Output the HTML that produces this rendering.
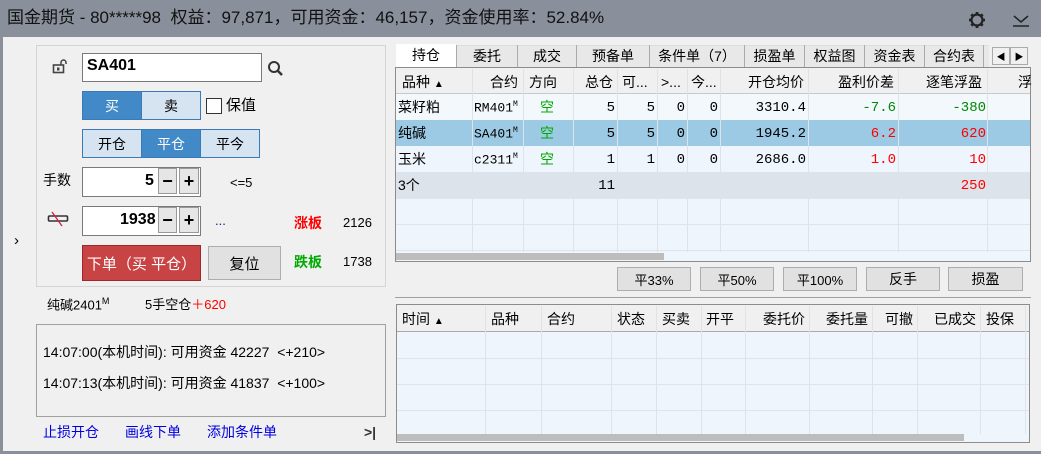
<!DOCTYPE html>
<html><head><meta charset="utf-8"><style>
*{margin:0;padding:0;box-sizing:border-box}
body{width:1041px;height:454px;overflow:hidden;background:#8a909b;font-family:"Liberation Sans","Noto Sans CJK SC",sans-serif;font-size:13px;color:#000;position:relative}
.a{position:absolute}
.main{left:3px;top:37px;width:1038px;height:414px;background:#f0f0f0}
.t{white-space:nowrap;line-height:1}
.btn{position:absolute;display:flex;align-items:center;justify-content:center;font-size:14px}
.grid{background:#eff5fc;border:1px solid #8c8c8c}
.cell{position:absolute;white-space:nowrap;font-size:14px;line-height:1}
.hdr{background:#f0f0f0;border-bottom:1px solid #c8c8c8}
.vl{position:absolute;width:1px;background:#dfe3e8}
.hl{position:absolute;height:1px;background:#e0e4ea}
.mono{font-family:"Liberation Mono","Noto Sans CJK SC",monospace}
.tab{position:absolute;top:45px;height:22px;line-height:22px;text-align:center;font-size:14px;border-left:1px solid #aaa;white-space:nowrap}
</style></head><body>
<div class="a t" style="left:7px;top:9px;font-size:17px;color:#111">国金期货 - 80*****98&nbsp; 权益：97,871，可用资金：46,157，资金使用率：52.84%</div>
<svg class="a" style="left:967px;top:10px" width="20" height="20" viewBox="0 0 20 20"><circle cx="10" cy="10" r="5.5" fill="none" stroke="#222" stroke-width="2.2"/><g stroke="#222" stroke-width="2.6"><line x1="10" y1="2" x2="10" y2="5"/><line x1="10" y1="15" x2="10" y2="18"/><line x1="2" y1="10" x2="5" y2="10"/><line x1="15" y1="10" x2="18" y2="10"/><line x1="4.3" y1="4.3" x2="6.4" y2="6.4"/><line x1="13.6" y1="13.6" x2="15.7" y2="15.7"/><line x1="4.3" y1="15.7" x2="6.4" y2="13.6"/><line x1="13.6" y1="6.4" x2="15.7" y2="4.3"/></g></svg>
<svg class="a" style="left:1012px;top:12px" width="18" height="16" viewBox="0 0 18 16"><polyline points="2,4 9,10 16,4" fill="none" stroke="#222" stroke-width="1.5"/><line x1="1" y1="14" x2="17" y2="14" stroke="#222" stroke-width="1.5"/></svg>

<div class="a main"></div>
<div class="a t" style="left:14px;top:233px;font-size:15px">›</div>
<div class="a" style="left:36px;top:45px;width:350px;height:242px;border:1px solid #d4d4d4"></div>
<svg class="a" style="left:52px;top:58px" width="16" height="16" viewBox="0 0 16 16"><rect x="1.5" y="7" width="10" height="7.5" fill="none" stroke="#444" stroke-width="1.6"/><rect x="5" y="9.5" width="2.5" height="3" fill="#444"/><path d="M9 7V4.5a2.5 2.5 0 0 1 5 0V6" fill="none" stroke="#444" stroke-width="1.5"/></svg>
<div class="a" style="left:82px;top:53px;width:180px;height:29px;background:#fff;border:1px solid #7a7a7a"></div>
<div class="a t" style="left:87px;top:58px;font-size:16px;font-weight:bold">SA401</div>
<svg class="a" style="left:267px;top:60px" width="18" height="18" viewBox="0 0 18 18"><circle cx="7" cy="7" r="5" fill="none" stroke="#333" stroke-width="2"/><line x1="10.5" y1="10.5" x2="15" y2="15" stroke="#333" stroke-width="2.5"/></svg>
<div class="btn" style="left:82px;top:91px;width:60px;height:29px;background:#4189c7;color:#fff;border:1px solid #3a7ab8">买</div>
<div class="btn" style="left:141px;top:91px;width:60px;height:29px;background:#d6e4f2;border:1px solid #3a7ab8">卖</div>
<div class="a" style="left:206px;top:98px;width:16px;height:16px;background:#fff;border:1px solid #333"></div>
<div class="a t" style="left:226px;top:98px;font-size:15px">保值</div>
<div class="btn" style="left:82px;top:129px;width:60px;height:29px;background:#d6e4f2;border:1px solid #3a7ab8">开仓</div>
<div class="btn" style="left:141px;top:129px;width:60px;height:29px;background:#4189c7;color:#fff;border:1px solid #3a7ab8">平仓</div>
<div class="btn" style="left:200px;top:129px;width:60px;height:29px;background:#d6e4f2;border:1px solid #3a7ab8">平今</div>
<div class="a t" style="left:43px;top:173px;font-size:14px">手数</div>
<div class="a" style="left:82px;top:167px;width:119px;height:30px;background:#fff;border:1px solid #7a7a7a"></div>
<div class="a t" style="left:145px;top:173px;font-size:16px;font-weight:bold">5</div>
<div class="btn" style="left:158px;top:168px;width:19px;height:26px;background:#e6e6e6;border:1px solid #999;font-weight:bold;font-size:18px">−</div>
<div class="btn" style="left:179px;top:168px;width:20px;height:26px;background:#e6e6e6;border:1px solid #999;font-weight:bold;font-size:18px">+</div>
<div class="a t" style="left:230px;top:176px;font-size:13px">&lt;=5</div>
<svg class="a" style="left:47px;top:211px" width="22" height="16" viewBox="0 0 22 16"><rect x="1.5" y="5" width="19" height="5" rx="1" fill="none" stroke="#333" stroke-width="1.6"/><line x1="5" y1="1" x2="15" y2="15" stroke="#d02040" stroke-width="1.3"/></svg>
<div class="a" style="left:82px;top:206px;width:119px;height:30px;background:#fff;border:1px solid #7a7a7a"></div>
<div class="a t" style="left:120px;top:212px;font-size:16px;font-weight:bold">1938</div>
<div class="btn" style="left:158px;top:207px;width:19px;height:26px;background:#e6e6e6;border:1px solid #999;font-weight:bold;font-size:18px">−</div>
<div class="btn" style="left:179px;top:207px;width:20px;height:26px;background:#e6e6e6;border:1px solid #999;font-weight:bold;font-size:18px">+</div>
<div class="a t" style="left:215px;top:214px;font-size:13px;color:#0a2a7a">...</div>
<div class="a t" style="left:294px;top:216px;font-size:14px;color:#f00;font-weight:bold">涨板</div>
<div class="a t" style="left:343px;top:216px;font-size:13px">2126</div>
<div class="btn" style="left:82px;top:245px;width:119px;height:36px;background:#c84444;color:#fff;border:1px solid #a02828;font-size:15px">下单（买 平仓）</div>
<div class="btn" style="left:208px;top:246px;width:73px;height:34px;background:#e1e1e1;border:1px solid #adadad;font-size:15px">复位</div>
<div class="a t" style="left:294px;top:255px;font-size:14px;color:#0a0;font-weight:bold">跌板</div>
<div class="a t" style="left:343px;top:255px;font-size:13px">1738</div>

<div class="a t" style="left:47px;top:297px;font-size:13px">纯碱2401<sup style="font-size:9px">M</sup></div>
<div class="a t" style="left:145px;top:298px;font-size:13px">5手空仓<span style="color:#f00">＋620</span></div>
<div class="a" style="left:36px;top:324px;width:350px;height:93px;border:1px solid #a0a0a0;background:#f0f0f0"></div>
<div class="a t" style="left:43px;top:345px;font-size:14px">14:07:00(本机时间): 可用资金 42227 &nbsp;&lt;+210&gt;</div>
<div class="a t" style="left:43px;top:376px;font-size:14px">14:07:13(本机时间): 可用资金 41837 &nbsp;&lt;+100&gt;</div>
<div class="a t" style="left:43px;top:425px;font-size:14px;color:#0000e0">止损开仓</div>
<div class="a t" style="left:125px;top:425px;font-size:14px;color:#0000e0">画线下单</div>
<div class="a t" style="left:207px;top:425px;font-size:14px;color:#0000e0">添加条件单</div>
<div class="a t" style="left:364px;top:425px;font-size:14px;color:#333;font-weight:bold">&gt;|</div>

<div class="a" style="left:396px;top:45px;width:593px;height:22px;background:#e8e8e8;border-top:1px solid #ddd"></div>
<div class="a" style="left:396px;top:44px;width:60px;height:24px;background:#fff"></div>
<div class="a t" style="left:396px;top:48px;width:60px;text-align:center;font-size:14px">持仓</div>
<div class="tab" style="left:456px;width:61px">委托</div>
<div class="tab" style="left:517px;width:59px">成交</div>
<div class="tab" style="left:576px;width:73px">预备单</div>
<div class="tab" style="left:649px;width:95px">条件单（7）</div>
<div class="tab" style="left:744px;width:60px">损盈单</div>
<div class="tab" style="left:804px;width:60px">权益图</div>
<div class="tab" style="left:864px;width:60px">资金表</div>
<div class="tab" style="left:924px;width:60px;border-right:1px solid #aaa">合约表</div>
<div class="btn" style="left:992px;top:47px;width:18px;height:18px;background:#f0f0f0;border:1px solid #aaa;font-size:9px">◀</div>
<div class="btn" style="left:1010px;top:47px;width:18px;height:18px;background:#f0f0f0;border:1px solid #aaa;font-size:9px">▶</div>

<div class="a grid" style="left:395px;top:67px;width:636px;height:195px"></div>
<div class="a hdr" style="left:396px;top:68px;width:634px;height:26px"></div>
<div class="a" style="left:396px;top:94px;width:634px;height:26px;background:#f3f8fd"></div>
<div class="a" style="left:396px;top:120px;width:634px;height:26px;background:#9ccae4"></div>
<div class="a" style="left:396px;top:172px;width:634px;height:26px;background:#dde3ea"></div>
<div class="hl" style="left:396px;top:198px;width:634px"></div>
<div class="hl" style="left:396px;top:224px;width:634px"></div>
<div class="hl" style="left:396px;top:250px;width:634px"></div>
<div class="vl" style="left:472px;top:69px;height:183px"></div>
<div class="vl" style="left:523px;top:69px;height:183px"></div>
<div class="vl" style="left:573px;top:69px;height:183px"></div>
<div class="vl" style="left:617px;top:69px;height:183px"></div>
<div class="vl" style="left:657px;top:69px;height:183px"></div>
<div class="vl" style="left:687px;top:69px;height:183px"></div>
<div class="vl" style="left:720px;top:69px;height:183px"></div>
<div class="vl" style="left:808px;top:69px;height:183px"></div>
<div class="vl" style="left:898px;top:69px;height:183px"></div>
<div class="vl" style="left:987px;top:69px;height:183px"></div>
<div class="a" style="left:396px;top:253px;width:268px;height:7px;background:#bdbdbd"></div>
<div class="cell" style="left:402px;top:75px">品种 <span style="font-size:10px">▲</span></div>
<div class="cell" style="left:472px;top:75px;width:46px;text-align:right">合约</div>
<div class="cell" style="left:529px;top:75px">方向</div>
<div class="cell" style="left:573px;top:75px;width:40px;text-align:right">总仓</div>
<div class="cell" style="left:622px;top:75px">可...</div>
<div class="cell" style="left:661px;top:75px">&gt;...</div>
<div class="cell" style="left:691px;top:75px">今...</div>
<div class="cell" style="left:720px;top:75px;width:84px;text-align:right">开仓均价</div>
<div class="cell" style="left:808px;top:75px;width:86px;text-align:right">盈利价差</div>
<div class="cell" style="left:898px;top:75px;width:84px;text-align:right">逐笔浮盈</div>
<div class="cell" style="left:1018px;top:75px">浮</div>

<div class="cell" style="left:398px;top:100px">菜籽粕</div>
<div class="cell mono" style="left:474px;top:101px;font-size:13px">RM401<sup style="font-size:8px">M</sup></div>
<div class="cell" style="left:540px;top:100px;color:#0a0">空</div>
<div class="cell mono" style="left:573px;top:101px;width:42px;text-align:right">5</div>
<div class="cell mono" style="left:617px;top:101px;width:38px;text-align:right">5</div>
<div class="cell mono" style="left:657px;top:101px;width:28px;text-align:right">0</div>
<div class="cell mono" style="left:687px;top:101px;width:31px;text-align:right">0</div>
<div class="cell mono" style="left:720px;top:101px;width:86px;text-align:right">3310.4</div>
<div class="cell mono" style="left:808px;top:101px;width:88px;text-align:right;color:#080">-7.6</div>
<div class="cell mono" style="left:898px;top:101px;width:88px;text-align:right;color:#080">-380</div>

<div class="cell" style="left:398px;top:126px">纯碱</div>
<div class="cell mono" style="left:474px;top:127px;font-size:13px">SA401<sup style="font-size:8px">M</sup></div>
<div class="cell" style="left:540px;top:126px;color:#0a0">空</div>
<div class="cell mono" style="left:573px;top:127px;width:42px;text-align:right">5</div>
<div class="cell mono" style="left:617px;top:127px;width:38px;text-align:right">5</div>
<div class="cell mono" style="left:657px;top:127px;width:28px;text-align:right">0</div>
<div class="cell mono" style="left:687px;top:127px;width:31px;text-align:right">0</div>
<div class="cell mono" style="left:720px;top:127px;width:86px;text-align:right">1945.2</div>
<div class="cell mono" style="left:808px;top:127px;width:88px;text-align:right;color:#f00">6.2</div>
<div class="cell mono" style="left:898px;top:127px;width:88px;text-align:right;color:#f00">620</div>

<div class="cell" style="left:398px;top:152px">玉米</div>
<div class="cell mono" style="left:474px;top:153px;font-size:13px">c2311<sup style="font-size:8px">M</sup></div>
<div class="cell" style="left:540px;top:152px;color:#0a0">空</div>
<div class="cell mono" style="left:573px;top:153px;width:42px;text-align:right">1</div>
<div class="cell mono" style="left:617px;top:153px;width:38px;text-align:right">1</div>
<div class="cell mono" style="left:657px;top:153px;width:28px;text-align:right">0</div>
<div class="cell mono" style="left:687px;top:153px;width:31px;text-align:right">0</div>
<div class="cell mono" style="left:720px;top:153px;width:86px;text-align:right">2686.0</div>
<div class="cell mono" style="left:808px;top:153px;width:88px;text-align:right;color:#f00">1.0</div>
<div class="cell mono" style="left:898px;top:153px;width:88px;text-align:right;color:#f00">10</div>

<div class="cell" style="left:398px;top:178px">3个</div>
<div class="cell mono" style="left:573px;top:179px;width:42px;text-align:right">11</div>
<div class="cell mono" style="left:898px;top:179px;width:88px;text-align:right;color:#f00">250</div>

<div class="btn" style="left:617px;top:267px;width:74px;height:24px;background:#e1e1e1;border:1px solid #adadad;font-size:13px">平33%</div>
<div class="btn" style="left:700px;top:267px;width:74px;height:24px;background:#e1e1e1;border:1px solid #adadad;font-size:13px">平50%</div>
<div class="btn" style="left:783px;top:267px;width:74px;height:24px;background:#e1e1e1;border:1px solid #adadad;font-size:13px">平100%</div>
<div class="btn" style="left:866px;top:267px;width:74px;height:24px;background:#e1e1e1;border:1px solid #adadad;font-size:14px">反手</div>
<div class="btn" style="left:948px;top:267px;width:75px;height:24px;background:#e1e1e1;border:1px solid #adadad;font-size:14px">损盈</div>
<div class="a" style="left:395px;top:297px;width:636px;height:1px;background:#a0a0a0"></div>

<div class="a grid" style="left:396px;top:304px;width:634px;height:139px"></div>
<div class="a hdr" style="left:397px;top:305px;width:632px;height:27px;border-bottom:1px solid #aaa"></div>
<div class="hl" style="left:397px;top:358px;width:632px"></div>
<div class="hl" style="left:397px;top:384px;width:632px"></div>
<div class="hl" style="left:397px;top:410px;width:632px"></div>
<div class="vl" style="left:485px;top:306px;height:128px"></div>
<div class="vl" style="left:541px;top:306px;height:128px"></div>
<div class="vl" style="left:611px;top:306px;height:128px"></div>
<div class="vl" style="left:656px;top:306px;height:128px"></div>
<div class="vl" style="left:701px;top:306px;height:128px"></div>
<div class="vl" style="left:745px;top:306px;height:128px"></div>
<div class="vl" style="left:809px;top:306px;height:128px"></div>
<div class="vl" style="left:872px;top:306px;height:128px"></div>
<div class="vl" style="left:917px;top:306px;height:128px"></div>
<div class="vl" style="left:980px;top:306px;height:128px"></div>
<div class="vl" style="left:1025px;top:306px;height:128px"></div>
<div class="a" style="left:397px;top:434px;width:567px;height:7px;background:#bdbdbd"></div>
<div class="cell" style="left:402px;top:312px">时间 <span style="font-size:10px">▲</span></div>
<div class="cell" style="left:491px;top:312px">品种</div>
<div class="cell" style="left:547px;top:312px">合约</div>
<div class="cell" style="left:617px;top:312px">状态</div>
<div class="cell" style="left:662px;top:312px">买卖</div>
<div class="cell" style="left:706px;top:312px">开平</div>
<div class="cell" style="left:745px;top:312px;width:60px;text-align:right">委托价</div>
<div class="cell" style="left:809px;top:312px;width:59px;text-align:right">委托量</div>
<div class="cell" style="left:872px;top:312px;width:41px;text-align:right">可撤</div>
<div class="cell" style="left:917px;top:312px;width:59px;text-align:right">已成交</div>
<div class="cell" style="left:986px;top:312px">投保</div>
</body></html>
